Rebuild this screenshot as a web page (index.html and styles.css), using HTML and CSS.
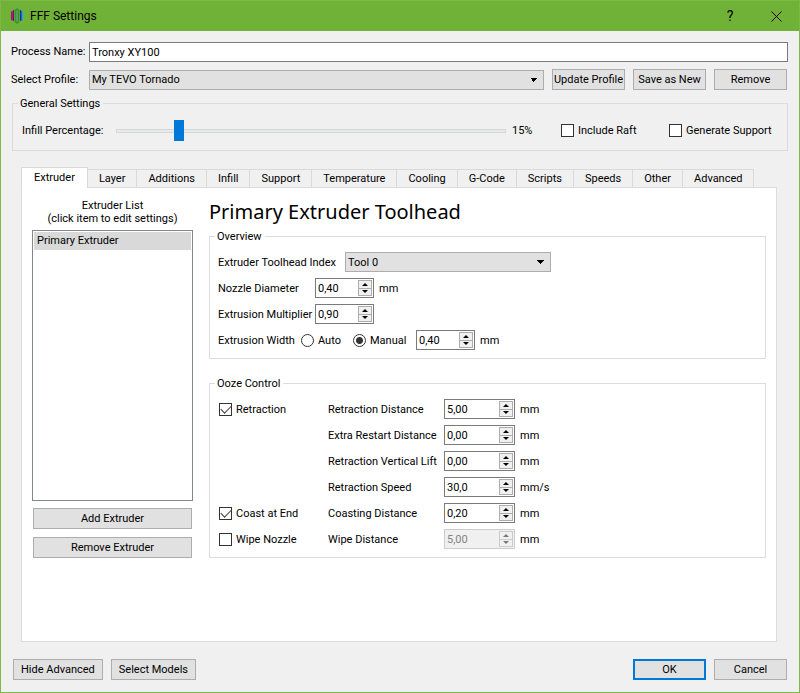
FILE: index.html
```html
<!DOCTYPE html>
<html lang="en">
<head>
<meta charset="utf-8">
<title>FFF Settings</title>
<meta name="viewport" content="width=device-width, initial-scale=1">
<link rel="stylesheet" href="styles.css">
</head>
<body>
<header class="titlebar">
  <svg class="app-icon" viewBox="0 0 14 16" aria-hidden="true">
    <path d="M1 4l3-2v11l-3-1z" fill="#d4126a"/>
    <path d="M3 2.500l1-.5v11l-1-.5z" fill="#5a1d6e"/>
    <path d="M1 4l1-.7v9L1 12z" fill="#a01060"/>
    <path d="M13 4l-3-2v11l3-1z" fill="#1c62d8"/>
    <path d="M11 2.500L10 2v11l1-.5z" fill="#23307c"/>
    <path d="M13 4l-1-.7v9l1-.3z" fill="#20a8e0"/>
    <path d="M7 0l2.500 2v12L7 16l-2.500-2V2z" fill="#2c9a3c"/>
    <path d="M7 2l1 1v10l-1 1-1-1V3z" fill="#5f9a58"/>
  </svg>
  <h1 class="window-title">FFF Settings</h1>
  <button class="caption-button caption-help" type="button" aria-label="Help">?</button>
  <button class="caption-button" type="button" aria-label="Close">
    <svg class="close-icon" viewBox="0 0 11 11"><path d="M.5.5l10 10M10.5.5l-10 10" stroke="#000" fill="none"/></svg>
  </button>
</header>

<form class="dialog">
  <div class="field-row">
    <label class="field-label" for="process-name">Process Name:</label>
    <input class="text-input" id="process-name" type="text" value="Tronxy XY100">
  </div>
  <div class="field-row profile-row">
    <label class="field-label" for="profile">Select Profile:</label>
    <select class="select profile-select" id="profile"><option>My TEVO Tornado</option></select>
    <button class="button button-fixed" type="button">Update Profile</button>
    <button class="button button-fixed" type="button">Save as New</button>
    <button class="button button-fixed" type="button">Remove</button>
  </div>

  <fieldset class="group general">
    <legend>General Settings</legend>
    <div class="general-row">
      <label class="slider-label" for="infill">Infill Percentage:</label>
      <input class="slider" id="infill" type="range" min="0" max="100" value="15">
      <output class="slider-value" for="infill">15%</output>
      <label class="check raft"><input type="checkbox">Include Raft</label>
      <label class="check support"><input type="checkbox">Generate Support</label>
    </div>
  </fieldset>

  <div class="tabs" role="tablist">
    <button class="tab tab-active" type="button" role="tab" aria-selected="true">Extruder</button>
    <button class="tab" type="button" role="tab">Layer</button>
    <button class="tab" type="button" role="tab">Additions</button>
    <button class="tab" type="button" role="tab">Infill</button>
    <button class="tab" type="button" role="tab">Support</button>
    <button class="tab" type="button" role="tab">Temperature</button>
    <button class="tab" type="button" role="tab">Cooling</button>
    <button class="tab" type="button" role="tab">G-Code</button>
    <button class="tab" type="button" role="tab">Scripts</button>
    <button class="tab" type="button" role="tab">Speeds</button>
    <button class="tab" type="button" role="tab">Other</button>
    <button class="tab" type="button" role="tab">Advanced</button>
  </div>

  <section class="panel">
    <div class="sidebar">
      <p class="list-caption">Extruder List<br>(click item to edit settings)</p>
      <ul class="list" role="listbox" aria-label="Extruder List">
        <li class="list-item" role="option" aria-selected="true">Primary Extruder</li>
      </ul>
      <button class="button side-button" type="button">Add Extruder</button>
      <button class="button side-button" type="button">Remove Extruder</button>
    </div>

    <div class="details">
      <h2 class="heading">Primary Extruder Toolhead</h2>

      <fieldset class="group overview">
        <legend>Overview</legend>
        <div class="row">
          <label class="index-label" for="tool">Extruder Toolhead Index</label>
          <select class="select tool-select" id="tool"><option>Tool 0</option></select>
        </div>
        <div class="row">
          <label class="narrow-label" for="nozzle">Nozzle Diameter</label>
          <span class="spin"><input id="nozzle" type="text" inputmode="decimal" value="0,40"><span class="steps"><button class="step" type="button" aria-label="Increase"></button><button class="step step-down" type="button" aria-label="Decrease"></button></span></span>
          <span class="unit">mm</span>
        </div>
        <div class="row">
          <label class="narrow-label" for="multiplier">Extrusion Multiplier</label>
          <span class="spin"><input id="multiplier" type="text" inputmode="decimal" value="0,90"><span class="steps"><button class="step" type="button" aria-label="Increase"></button><button class="step step-down" type="button" aria-label="Decrease"></button></span></span>
        </div>
        <div class="row">
          <label class="width-label" for="width">Extrusion Width</label>
          <label class="radio"><input type="radio" name="width-mode">Auto</label>
          <label class="radio radio-manual"><input type="radio" name="width-mode" checked>Manual</label>
          <span class="spin"><input id="width" type="text" inputmode="decimal" value="0,40"><span class="steps"><button class="step" type="button" aria-label="Increase"></button><button class="step step-down" type="button" aria-label="Decrease"></button></span></span>
          <span class="unit">mm</span>
        </div>
      </fieldset>

      <fieldset class="group ooze">
        <legend>Ooze Control</legend>
        <div class="ooze-row">
          <label class="check"><input type="checkbox" checked>Retraction</label>
          <label for="r-distance">Retraction Distance</label>
          <span class="spin"><input id="r-distance" type="text" inputmode="decimal" value="5,00"><span class="steps"><button class="step" type="button" aria-label="Increase"></button><button class="step step-down" type="button" aria-label="Decrease"></button></span></span>
          <span class="unit">mm</span>
        </div>
        <div class="ooze-row">
          <span></span>
          <label for="r-restart">Extra Restart Distance</label>
          <span class="spin"><input id="r-restart" type="text" inputmode="decimal" value="0,00"><span class="steps"><button class="step" type="button" aria-label="Increase"></button><button class="step step-down" type="button" aria-label="Decrease"></button></span></span>
          <span class="unit">mm</span>
        </div>
        <div class="ooze-row">
          <span></span>
          <label for="r-lift">Retraction Vertical Lift</label>
          <span class="spin"><input id="r-lift" type="text" inputmode="decimal" value="0,00"><span class="steps"><button class="step" type="button" aria-label="Increase"></button><button class="step step-down" type="button" aria-label="Decrease"></button></span></span>
          <span class="unit">mm</span>
        </div>
        <div class="ooze-row">
          <span></span>
          <label for="r-speed">Retraction Speed</label>
          <span class="spin"><input id="r-speed" type="text" inputmode="decimal" value="30,0"><span class="steps"><button class="step" type="button" aria-label="Increase"></button><button class="step step-down" type="button" aria-label="Decrease"></button></span></span>
          <span class="unit">mm/s</span>
        </div>
        <div class="ooze-row">
          <label class="check"><input type="checkbox" checked>Coast at End</label>
          <label for="coast">Coasting Distance</label>
          <span class="spin"><input id="coast" type="text" inputmode="decimal" value="0,20"><span class="steps"><button class="step" type="button" aria-label="Increase"></button><button class="step step-down" type="button" aria-label="Decrease"></button></span></span>
          <span class="unit">mm</span>
        </div>
        <div class="ooze-row">
          <label class="check"><input type="checkbox">Wipe Nozzle</label>
          <label for="wipe">Wipe Distance</label>
          <span class="spin spin-disabled"><input id="wipe" type="text" inputmode="decimal" value="5,00" disabled><span class="steps"><button class="step" type="button" aria-label="Increase" disabled></button><button class="step step-down" type="button" aria-label="Decrease" disabled></button></span></span>
          <span class="unit">mm</span>
        </div>
      </fieldset>
    </div>
  </section>

  <footer class="actions">
    <button class="button" type="button">Hide Advanced</button>
    <button class="button" type="button">Select Models</button>
    <span class="spacer"></span>
    <button class="button button-fixed button-default" type="submit">OK</button>
    <button class="button button-fixed" type="button">Cancel</button>
  </footer>
</form>
</body>
</html>
```
FILE: styles.css
```css
* {
  box-sizing: border-box;
}

body {
  margin: 0;
  min-height: 100vh;
  display: flex;
  flex-direction: column;
  border: 1px solid #7cba46;
  background: #f0f0f0;
  color: #000;
  font: 11px/14px Roboto, Tahoma, sans-serif;
  white-space: nowrap;
}

button,
input,
select {
  margin: 0;
  font: inherit;
  color: inherit;
  border-radius: 0;
}

/* Title bar */
.titlebar {
  display: flex;
  align-items: center;
  height: 30px;
  padding-left: 9px;
  background: #70b237;
}

.app-icon {
  width: 14px;
  height: 16px;
}

.window-title {
  flex: 1;
  margin: 0 0 0 6px;
  font-size: 12px;
  line-height: 16px;
  font-weight: 400;
}

.caption-button {
  display: flex;
  align-items: center;
  justify-content: center;
  width: 46px;
  height: 28px;
  padding: 0;
  border: 0;
  background: none;
}

.caption-help {
  font-size: 14px;
}

.close-icon {
  width: 11px;
  height: 11px;
}

/* Dialog */
.dialog {
  flex: 1;
  display: flex;
  flex-direction: column;
  padding: 11px 11px 12px 10px;
}

.field-row {
  display: flex;
  align-items: center;
  margin-bottom: 7px;
}

.field-label {
  flex: none;
  width: 78px;
}

.text-input {
  flex: 1;
  min-width: 0;
  height: 20px;
  padding: 1px 2px 0;
  border: 1px solid #7a7a7a;
  background: #fff;
}

.profile-row {
  height: 21px;
  margin-bottom: 6px;
  padding-right: 1px;
}

.button {
  height: 21px;
  padding: 1px 7px 0;
  border: 1px solid #adadad;
  background: #e1e1e1;
}

.button-fixed {
  flex: none;
  width: 73px;
  padding: 1px 0 0;
  margin-left: 8px;
}

.button-default {
  border: 2px solid #0078d7;
}

.select {
  appearance: none;
  height: 20px;
  padding: 1px 20px 0 2px;
  border: 1px solid #adadad;
  background-color: #e1e1e1;
  background-image: linear-gradient(to bottom left, #000 50%, transparent 50%), linear-gradient(to bottom right, #000 50%, transparent 50%);
  background-repeat: no-repeat;
  background-size: 4px 4px;
  background-position: right 9px center, right 5px center;
}

.profile-select {
  flex: 1;
  min-width: 0;
}

/* Group boxes */
.group {
  min-width: 0;
  margin: 0;
  border: 1px solid #dcdcdc;
}

.group legend {
  padding: 1px 3px 0 2px;
  line-height: 13px;
}

.general {
  margin-left: 1px;
  padding: 10px 10px 9px 5px;
}

.general-row {
  display: flex;
  align-items: center;
  height: 21px;
  padding-left: 4px;
}

.slider-label {
  width: 94px;
}

.slider {
  appearance: none;
  flex: 1;
  min-width: 0;
  height: 21px;
  background: none;
}

.slider::-webkit-slider-runnable-track {
  height: 4px;
  border: 1px solid #d6d6d6;
  background: #e7eaea;
}

.slider::-webkit-slider-thumb {
  appearance: none;
  width: 10px;
  height: 21px;
  margin-top: -10px;
  background: #0078d7;
}

.slider-value {
  width: 55px;
  padding-left: 6px;
}

.check,
.radio {
  display: flex;
  align-items: center;
  gap: 4px;
}

.raft,
.support {
  width: 108px;
}

.check input {
  appearance: none;
  width: 13px;
  height: 13px;
  border: 1px solid #333;
  background: #fff;
}

.check input:checked {
  display: grid;
  place-items: center;
}

.check input:checked::before {
  content: "";
  width: 9px;
  height: 5px;
  border: solid #404040;
  border-width: 0 0 1px 1px;
  rotate: -45deg;
  translate: 0 -1px;
}

.radio input {
  appearance: none;
  width: 13px;
  height: 13px;
  border: 1px solid #333;
  border-radius: 50%;
  background: #fff;
}

.radio input:checked {
  background: radial-gradient(circle, #333 3px, #fff 4px);
}

/* Tabs */
.tabs {
  display: flex;
  align-items: flex-end;
  height: 20px;
  margin: 16px 0 0 10px;
}

.tab {
  height: 18px;
  padding: 1px 11px 0;
  border: 1px solid #d9d9d9;
  border-width: 1px 1px 0 0;
  background: #f0f0f0;
}

.tab-active {
  z-index: 1;
  height: 21px;
  margin-bottom: -1px;
  padding: 0 12px;
  border-left-width: 1px;
  background: #fff;
}

.panel {
  flex: 1;
  display: flex;
  gap: 16px;
  margin: 0 11px 17px 10px;
  padding: 10px;
  border: 1px solid #dcdcdc;
  background: #fff;
}

/* Extruder list */
.sidebar {
  flex: none;
  display: flex;
  flex-direction: column;
  width: 161px;
}

.list-caption {
  margin: 1px 0 5px;
  line-height: 13px;
  text-align: center;
}

.list {
  height: 271px;
  margin: 0 0 7px;
  padding: 1px;
  border: 1px solid #828790;
  list-style: none;
}

.list-item {
  padding: 2px 3px;
  background: #d9d9d9;
}

.side-button {
  margin: 0 1px 8px;
}

/* Extruder details */
.details {
  flex: 1;
  min-width: 0;
}

.heading {
  margin: 0;
  font: 400 20px/28px "Noto Sans", Tahoma, sans-serif;
}

.overview {
  margin-top: 3px;
  padding: 9px 5px 8px;
}

.row {
  display: flex;
  align-items: center;
  height: 20px;
  margin: 0 0 6px 3px;
}

.row:last-child {
  margin-bottom: 0;
}

.index-label {
  width: 127px;
}

.tool-select {
  width: 206px;
}

.narrow-label {
  width: 97px;
}

.width-label {
  width: 83px;
}

.radio {
  width: 52px;
}

.radio-manual {
  width: 63px;
}

.spin {
  display: flex;
  width: 59px;
  height: 20px;
  padding: 1px;
  border: 1px solid #7a7a7a;
  background: #fff;
}

.spin input {
  flex: 1;
  min-width: 0;
  padding: 1px 1px 0;
  border: 0;
  background: none;
}

.steps {
  display: flex;
  flex-direction: column;
  width: 14px;
}

.step {
  flex: 1;
  display: grid;
  place-items: center;
  min-height: 0;
  padding: 0;
  border: 1px solid #adadad;
  background: #f0f0f0;
}

.step-down {
  border-top: 0;
}

.step::before {
  content: "";
  border: solid transparent;
  border-width: 0 3px 3px;
  border-bottom-color: #000;
}

.step-down::before {
  border-width: 3px 3px 0;
  border-top-color: #000;
}

.unit {
  padding-left: 5px;
}

.row label,
.row .unit,
.ooze-row > label,
.ooze-row .unit {
  line-height: 15px;
}

.ooze {
  margin-top: 17px;
  padding: 9px 5px 8px;
}

.ooze-row {
  display: grid;
  grid-template-columns: 109px 116px 71px auto;
  align-items: center;
  height: 20px;
  margin: 0 0 6px 4px;
}

.ooze-row:last-child {
  margin-bottom: 0;
}

.ooze-row .spin {
  width: 71px;
}

.spin-disabled {
  border-color: #ccc;
  background: #f0f0f0;
  color: #838383;
}

.spin-disabled .step {
  border-color: #ccc;
}

.spin-disabled .step::before {
  opacity: 0.5;
}

/* Footer */
.actions {
  display: flex;
  gap: 8px;
  padding: 0 1px 0 2px;
}

.actions .button-fixed {
  margin-left: 0;
}

.spacer {
  flex: 1;
}
```
